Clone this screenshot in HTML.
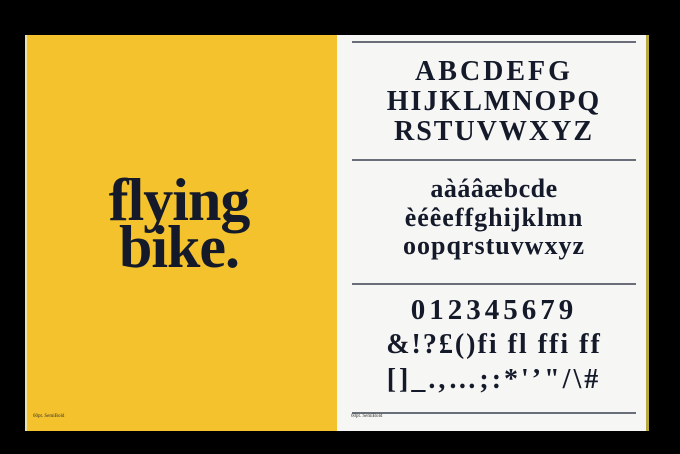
<!DOCTYPE html>
<html><head><meta charset="utf-8"><style>
body{margin:0;width:680px;height:454px;background:#000;position:relative;overflow:hidden;font-family:"Liberation Serif",serif;}
.l{position:absolute;left:25px;top:35px;width:312px;height:396px;background:#f3c22c;}
.ledge{position:absolute;left:25px;top:35px;width:2px;height:396px;background:#e8e0b0;}
.r{position:absolute;left:337px;top:35px;width:311px;height:396px;background:#f6f6f4;}
.redge{position:absolute;left:646px;top:35px;width:3px;height:396px;background:#b8a840;}
.hr{position:absolute;left:352px;width:284px;height:1.5px;background:#6a6e78;}
.t{position:absolute;left:337px;width:314px;text-align:center;font-weight:bold;color:#151a2a;white-space:nowrap;line-height:1;}
.big{position:absolute;left:2px;width:354px;text-align:center;font-weight:bold;color:#151a2a;font-size:60px;line-height:1;letter-spacing:-1px;}
.f{position:absolute;font-size:5px;color:#333;}
</style></head><body>
<div class="l"></div><div class="ledge"></div>
<div class="r"></div><div class="redge"></div>
<div class="hr" style="top:41px"></div>
<div class="hr" style="top:159px"></div>
<div class="hr" style="top:283px"></div>
<div class="hr" style="top:412px"></div>
<div class="big" style="top:170px">flying</div>
<div class="big" style="top:217px">bike.</div>
<div class="t" style="top:58px;font-size:28px;letter-spacing:3px">ABCDEFG</div>
<div class="t" style="top:88px;font-size:28px;letter-spacing:2px">HIJKLMNOPQ</div>
<div class="t" style="top:118px;font-size:28px;letter-spacing:2px">RSTUVWXYZ</div>
<div class="t" style="top:176px;font-size:26px;letter-spacing:0.5px">aàáâæbcde</div>
<div class="t" style="top:205px;font-size:26px;letter-spacing:1px">èéêeffghijklmn</div>
<div class="t" style="top:233px;font-size:26px;letter-spacing:1px">oopqrstuvwxyz</div>
<div class="t" style="top:296px;font-size:29px;letter-spacing:4px">012345679</div>
<div class="t" style="top:331px;font-size:28px;letter-spacing:2px">&amp;!?£()fi fl ffi ff</div>
<div class="t" style="top:366px;font-size:28px;letter-spacing:3px">[]_.,…;:*'’"/\#</div>
<div class="f" style="left:33px;top:414px">60pt. SemiBold</div>
<div class="f" style="left:351px;top:414px">60pt. SemiBold</div>
</body></html>
